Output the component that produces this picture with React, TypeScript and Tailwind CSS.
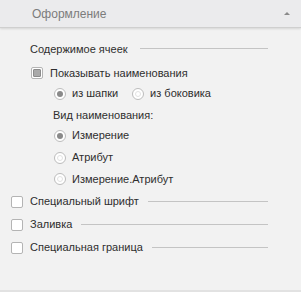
import React from "react";

const font = { fontFamily: '"Liberation Sans", Arial, sans-serif' };

function Line() {
  return <div className="ml-[2px] h-px flex-1 bg-[#c4c4c4]" />;
}

function Check({ on }: { on?: boolean }) {
  return (
    <div className="flex h-[12px] w-[12px] items-center justify-center rounded-[2px] border border-[#b4b4b4] bg-white">
      {on && <div className="h-[8px] w-[8px] rounded-[1px] border border-[#8c8c8c] bg-[#a9a9a9]" />}
    </div>
  );
}

function Radio({ on }: { on?: boolean }) {
  return (
    <div className="flex h-[12px] w-[12px] items-center justify-center rounded-full border border-[#bcbcbc] bg-white">
      {on ? (
        <div className="h-[6px] w-[6px] rounded-full bg-[#8a8a8a]" />
      ) : (
        <div className="h-[6px] w-[6px] rounded-full border border-[#e2e2e2]" />
      )}
    </div>
  );
}

export default function App() {
  return (
    <div className="h-[292px] w-[301px] border-b-2 border-[#e2e2e2] bg-[#f2f2f2] text-[11px] text-[#2e2e2e]" style={font}>
      <div className="flex h-[28px] items-center justify-between border-b border-[#cfcfcf] bg-[#ebebed] pl-[32px] pr-[11px] text-[12px] shadow-[0_1px_2px_rgba(0,0,0,0.12)]">
        <span className="text-[#7c7c7c]">Оформление</span>
        <div className="h-0 w-0 border-x-[3px] border-b-[3px] border-x-transparent border-b-[#8a8a8a]" />
      </div>
      <div className="flex flex-col pt-[10px] pr-[33px]">
        <div className="flex h-[25px] items-start pl-[30px] pt-[3px]">
          <span>Содержимое ячеек</span>
          <div className="ml-[12px] mt-[7px] h-px flex-1 bg-[#c4c4c4]" />
        </div>
        <div className="flex h-[20px] items-center gap-[7px] pl-[31px]">
          <Check on />
          <span>Показывать наименования</span>
        </div>
        <div className="flex h-[21px] items-center pl-[54px]">
          <Radio on />
          <span className="ml-[6px]">из шапки</span>
          <div className="ml-[14px]">
            <Radio />
          </div>
          <span className="ml-[6px]">из боковика</span>
        </div>
        <div className="flex h-[20px] items-center pl-[53px] pt-[2px]">
          <span>Вид наименования:</span>
        </div>
        <div className="flex h-[23px] items-center gap-[6px] pl-[54px]">
          <Radio on />
          <span>Измерение</span>
        </div>
        <div className="flex h-[21px] items-center gap-[6px] pl-[54px]">
          <Radio />
          <span>Атрибут</span>
        </div>
        <div className="flex h-[22px] items-center gap-[6px] pl-[54px]">
          <Radio />
          <span>Измерение.Атрибут</span>
        </div>
        <div className="flex h-[23px] items-center gap-[7px] pl-[11px]">
          <Check />
          <span>Специальный шрифт</span>
          <Line />
        </div>
        <div className="flex h-[23px] items-center gap-[7px] pl-[11px]">
          <Check />
          <span>Заливка</span>
          <Line />
        </div>
        <div className="flex h-[23px] items-center gap-[7px] pl-[11px]">
          <Check />
          <span>Специальная граница</span>
          <Line />
        </div>
      </div>
    </div>
  );
}
